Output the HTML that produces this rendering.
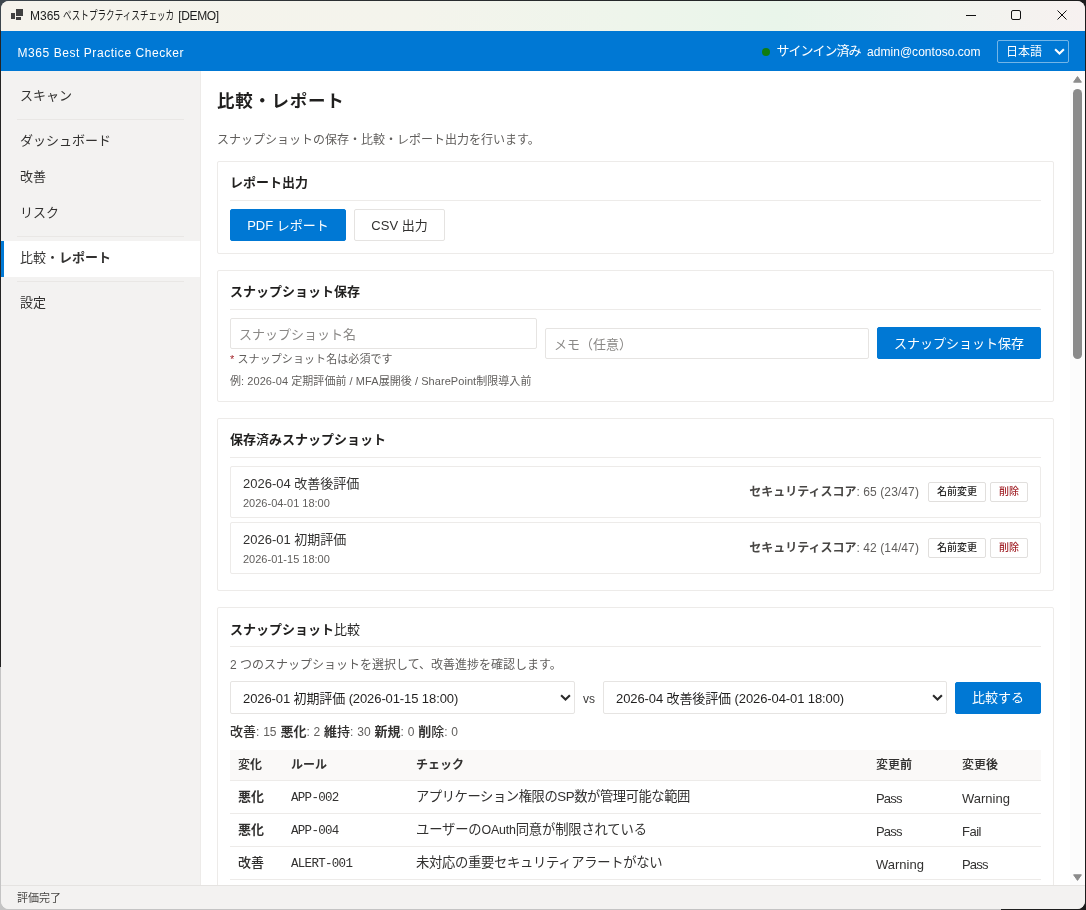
<!DOCTYPE html>
<html lang="ja">
<head>
<meta charset="utf-8">
<title>M365 ベストプラクティスチェッカ [DEMO]</title>
<style>
*{box-sizing:border-box;margin:0;padding:0}
html,body{width:1086px;height:910px;overflow:hidden;background:#1f1f1f}
html{background:linear-gradient(90deg,#3d464d 0%,#2c3033 30%,#1c1c1c 100%)}
body{background:transparent}
body{font-family:"Liberation Sans","Noto Sans CJK JP",sans-serif;font-size:13px;color:#323130;position:relative}
#deskL{position:absolute;left:0;top:0;width:12px;height:910px;background:linear-gradient(180deg,#3d464d 0,#3d464d 30px,#232323 31px,#232323 667px,#c4c4c4 667px,#c4c4c4 100%)}
#deskB{position:absolute;left:0;top:900px;width:1001px;height:10px;background:#c4c4c4}
#win{position:absolute;left:1px;top:1px;width:1084px;height:908px;border-radius:8px;overflow:hidden;background:#f3f2f1;will-change:transform}
#titlebar{position:absolute;left:0;top:0;width:1084px;height:30px;background:linear-gradient(90deg,#f5f3ec 0%,#f4f4ec 38%,#eef5eb 58%,#e9f5ea 72%,#f0f4ee 86%,#f7f1f0 100%)}
#titlebar .ttl{position:absolute;left:29px;top:0;line-height:30px;font-size:12px;color:#1b1b1b;white-space:nowrap}
#titlebar .kn{display:inline-block;transform:scaleX(.715);transform-origin:0 50%;width:115px}
#titlebar .dm{display:inline-block;letter-spacing:-.4px}
#appicon{position:absolute;left:10px;top:8px}
.wc{position:absolute;top:0;height:30px;width:46px}
#hdr{position:absolute;left:0;top:30px;width:1084px;height:40px;background:#0078d4;color:#fff}
#hdr .app{position:absolute;left:16.5px;top:1px;line-height:42px;font-size:12px;letter-spacing:.56px;white-space:nowrap}
#side{position:absolute;left:0;top:70px;width:199px;height:814px;background:#f3f2f1;padding-top:8px}
#side .it{height:36px;line-height:34px;padding-left:16px;border-left:3px solid transparent;font-size:13px;color:#323130;white-space:nowrap}
#side .it.act{background:#fff;border-left-color:#0078d4;font-weight:bold}
#side .sep{height:1px;background:#e9e7e5;margin:4px 16px 4px 16px}
s{text-decoration:none;font-weight:500}
s.r{font-weight:400}
#main{position:absolute;left:199px;top:70px;width:870px;height:814px;background:#fff;border-left:1px solid #edebe9;overflow:hidden}
#sb{position:absolute;left:1069px;top:70px;width:15px;height:814px;background:#fcfcfc}
#status{position:absolute;left:0;top:884px;width:1084px;height:24px;background:#f3f2f1;border-top:1px solid #e5e3e1;font-size:11px;color:#484644;line-height:24px;padding-left:16px}
h1{position:absolute;left:16px;top:16px;font-size:17.5px;letter-spacing:.7px;line-height:28px;font-weight:bold;color:#201f1e;white-space:nowrap}
.desc{position:absolute;left:16px;top:59px;font-size:12px;line-height:20px;color:#605e5c;white-space:nowrap}
.card{position:absolute;left:16px;width:837px;border:1px solid #edebe9;background:#fff;border-radius:2px}
.card h2{position:absolute;left:12px;top:11px;font-size:13px;line-height:20px;font-weight:bold;color:#201f1e;white-space:nowrap}
.card .hr{position:absolute;left:12px;right:12px;top:38px;height:1px;background:#edebe9}
.btn{position:absolute;height:32px;line-height:32px;text-align:center;font-size:13px;border:1px solid #e5e3e1;background:#fff;color:#323130;border-radius:2px;white-space:nowrap}
.btn.pri{background:#0078d4;border-color:#0078d4;color:#fff}

.inp{position:absolute;height:31px;border:1px solid #e6e4e2;border-radius:2px;background:#fff;font-size:13px;line-height:31px;color:#8a8886;padding-left:8px;white-space:nowrap}
.req{position:absolute;left:12px;top:79px;font-size:11px;letter-spacing:.08px;line-height:18px;color:#605e5c;white-space:nowrap}
.req i{font-style:normal;color:#a4262c}
.eg{position:absolute;left:12px;top:101px;font-size:11px;letter-spacing:.06px;line-height:18px;color:#605e5c;white-space:nowrap}
.snap{position:absolute;left:12px;width:811px;height:52px;border:1px solid #edebe9;border-radius:2px;background:#fff}
.snap .nm{position:absolute;left:12px;top:7px;font-size:13px;line-height:20px;color:#323130;white-space:nowrap}
.snap .dt{position:absolute;left:12px;top:27px;font-size:11px;line-height:18px;color:#605e5c;white-space:nowrap}
.snap .sc{position:absolute;right:121px;top:15px;font-size:12px;line-height:20px;color:#605e5c;white-space:nowrap;letter-spacing:.1px}
.snap .sc b{color:#484644;letter-spacing:0}
.sm{position:absolute;top:15px;height:20px;line-height:18px;font-size:10px;font-weight:500;text-align:center;border:1px solid #e1dfdd;border-radius:2px;background:#fff;color:#201f1e;white-space:nowrap}
.sm.del{color:#a4262c}
.cdesc{position:absolute;left:12px;top:47px;font-size:12px;line-height:20px;color:#605e5c;white-space:nowrap}
.sel{position:absolute;height:33px;border:1px solid #e6e4e2;border-radius:2px;background:#fff;font-size:13px;line-height:33px;color:#201f1e;padding-left:12px;white-space:nowrap;letter-spacing:-.1px}
.sel .chev{position:absolute;right:3px;top:12px}
.vs{position:absolute;left:365px;top:81px;font-size:12px;line-height:20px;color:#3b3a39}
.sum{position:absolute;left:12px;top:114px;font-size:12px;line-height:20px;color:#605e5c;white-space:nowrap;word-spacing:.5px}
.sum b{color:#323130;font-size:13px}
.tbl{position:absolute;left:12px;top:142px;width:811px}
.th{position:relative;height:31px;background:#faf9f8;border-bottom:1px solid #edebe9;font-size:12px;font-weight:bold;color:#323130}
.tr{position:relative;height:33px;border-bottom:1px solid #edebe9;font-size:13px;color:#323130}
.th span,.tr span{position:absolute;top:0;line-height:30px;white-space:nowrap}
.tr span{line-height:32px}
.c1{left:8px}.c2{left:61px}.c3{left:186px}.c4{left:646px}.c5{left:732px}
.tr .c1{font-weight:bold}
.tr .c3 em{font-style:normal;font-size:12.4px;position:static}
.tr .c4,.tr .c5{line-height:36px}
.tr .c2{font-family:"Liberation Mono","DejaVu Sans Mono",monospace;font-size:12.5px;letter-spacing:-.7px;line-height:35px}
.tr .c3{font-size:13.33px;line-height:32px}

#hdr .dot{position:absolute;left:761px;top:16.5px;width:8px;height:8px;border-radius:50%;background:#107c10}
#hdr .signed{position:absolute;left:775.5px;top:0;line-height:40px;font-size:13px;letter-spacing:-1px;white-space:nowrap}
#hdr .mail{position:absolute;left:866px;top:0;line-height:42px;font-size:12px;white-space:nowrap;letter-spacing:.04px}
#hdr .lang{position:absolute;left:996px;top:9px;width:72px;height:23px;border:1px solid rgba(255,255,255,.45);border-radius:2px;font-size:12px;line-height:23px;padding-left:8px;white-space:nowrap}
#hdr .lang svg{position:absolute;right:3.5px;top:6.5px}
</style>
</head>
<body>
<div id="deskL"></div><div id="deskB"></div>
<div id="win">
  <div id="titlebar">
    <svg id="appicon" width="14" height="12" viewBox="0 0 14 12"><rect x="0" y="4" width="4" height="6" fill="#404040"/><rect x="5" y="0" width="7" height="7" fill="#404040"/><rect x="5" y="8" width="5" height="3" fill="#404040"/></svg>

    <svg class="wc" style="left:947px" width="46" height="30" viewBox="0 0 46 30"><path d="M18 14.5 H28" stroke="#111" stroke-width="1" fill="none"/></svg>
    <svg class="wc" style="left:992px" width="46" height="30" viewBox="0 0 46 30"><rect x="18.5" y="9.5" width="9" height="9" rx="1.5" ry="1.5" stroke="#111" stroke-width="1" fill="none"/></svg>
    <svg class="wc" style="left:1038px" width="46" height="30" viewBox="0 0 46 30"><path d="M18.5 9.5 L27.5 18.5 M27.5 9.5 L18.5 18.5" stroke="#111" stroke-width="1" fill="none"/></svg>
    <div class="ttl">M365 <span class="kn">ベストプラクティスチェッカ</span><span class="dm">[DEMO]</span></div>
  </div>
  <div id="hdr">
    <div class="app">M365 Best Practice Checker</div>
    <div class="dot"></div>
    <div class="signed">サインイン済み</div>
    <div class="mail">admin@contoso.com</div>
    <div class="lang"><span>日本語</span><svg width="11" height="8" viewBox="0 0 11 8"><path d="M1.1 1.3 L5.5 5.5 L9.9 1.3" fill="none" stroke="#fff" stroke-width="2.1"/></svg></div>

  </div>
  <div id="side">
    <div class="it">スキャン</div>
    <div class="sep"></div>
    <div class="it">ダッシュボード</div>
    <div class="it">改善</div>
    <div class="it">リスク</div>
    <div class="sep"></div>
    <div class="it act"><s class="r">比較・</s>レポート</div>
    <div class="sep"></div>
    <div class="it">設定</div>
  </div>
  <div id="main">
    <h1>比較・レポート</h1>
    <div class="desc">スナップショットの保存・比較・レポート出力を行います。</div>

    <div class="card" style="top:90px;height:93px">
      <h2>レポート出力</h2><div class="hr"></div>
      <div class="btn pri" style="left:12px;top:47px;width:116px"><span>PDF レポート</span></div>
      <div class="btn" style="left:136px;top:47px;width:91px"><span>CSV 出力</span></div>
    </div>
    <div class="card" style="top:199px;height:132px">
      <h2>スナップショット保存</h2><div class="hr"></div>
      <div class="inp" style="left:12px;top:47px;width:307px"><span>スナップショット名</span></div>
      <div class="inp" style="left:327px;top:57px;width:324px"><span>メモ（任意）</span></div>
      <div class="btn pri" style="left:659px;top:56px;width:164px"><span>スナップショット保存</span></div>
      <div class="req"><i>*</i> スナップショット名は必須です</div>
      <div class="eg">例: 2026-04 定期評価前 / MFA展開後 / SharePoint制限導入前</div>
    </div>
    <div class="card" style="top:347px;height:173px">
      <h2>保存<s>済</s>みスナップショット</h2><div class="hr"></div>
      <div class="snap" style="top:47px">
        <div class="nm">2026-04 改善後評価</div><div class="dt">2026-04-01 18:00</div>
        <div class="sc"><b>セキュリティスコア</b>: 65 (23/47)</div>
        <div class="sm" style="left:697px;width:58px">名前変更</div><div class="sm del" style="left:759px;width:38px">削除</div>
      </div>
      <div class="snap" style="top:103px">
        <div class="nm">2026-01 初期評価</div><div class="dt">2026-01-15 18:00</div>
        <div class="sc"><b>セキュリティスコア</b>: 42 (14/47)</div>
        <div class="sm" style="left:697px;width:58px">名前変更</div><div class="sm del" style="left:759px;width:38px">削除</div>
      </div>
    </div>
    <div class="card" style="top:536px;height:320px">
      <h2 style="top:12px">スナップショット<s class="r">比較</s></h2><div class="hr"></div>
      <div class="cdesc">2 つのスナップショットを選択して、改善進捗を確認します。</div>
      <div class="sel" style="left:12px;top:73px;width:345px"><span>2026-01 初期評価 (2026-01-15 18:00)</span><svg class="chev" width="11" height="8" viewBox="0 0 11 8"><path d="M1.1 1.3 L5.5 5.5 L9.9 1.3" fill="none" stroke="#2b2b2b" stroke-width="2.1"/></svg></div>
      <div class="vs">vs</div>
      <div class="sel" style="left:385px;top:73px;width:344px"><span>2026-04 改善後評価 (2026-04-01 18:00)</span><svg class="chev" width="11" height="8" viewBox="0 0 11 8"><path d="M1.1 1.3 L5.5 5.5 L9.9 1.3" fill="none" stroke="#2b2b2b" stroke-width="2.1"/></svg></div>
      <div class="btn pri" style="left:737px;top:74px;width:86px;line-height:30px"><span>比較する</span></div>
      <div class="sum"><b><s>改善</s></b>: 15 <b>悪化</b>: 2 <b>維<s>持</s></b>: 30 <b>新規</b>: 0 <b>削<s>除</s></b>: 0</div>
      <div class="tbl">
        <div class="th"><span class="c1"><s>変</s>化</span><span class="c2">ルール</span><span class="c3">チェック</span><span class="c4"><s>変更</s>前</span><span class="c5"><s>変更</s>後</span></div>
        <div class="tr"><span class="c1">悪化</span><span class="c2">APP-002</span><span class="c3" style="letter-spacing:-.46px">アプリケーション権限のSP数が管理可能な範囲</span><span class="c4" style="letter-spacing:-.8px">Pass</span><span class="c5">Warning</span></div>
        <div class="tr"><span class="c1">悪化</span><span class="c2">APP-004</span><span class="c3" style="letter-spacing:-.18px">ユーザーの<em>OAuth</em>同意が制限されている</span><span class="c4" style="letter-spacing:-.8px">Pass</span><span class="c5" style="letter-spacing:-.5px">Fail</span></div>
        <div class="tr"><span class="c1"><s>改善</s></span><span class="c2">ALERT-001</span><span class="c3" style="letter-spacing:-.32px">未対応の重要セキュリティアラートがない</span><span class="c4">Warning</span><span class="c5" style="letter-spacing:-.8px">Pass</span></div>
      </div>
    </div>

  </div>
  <div id="sb"><svg width="15" height="814" viewBox="0 0 15 814"><path d="M3.6 11.2 L7.5 5.6 L11.4 11.2 Z" fill="#8b8b8b" stroke="#8b8b8b" stroke-width="1" stroke-linejoin="round"/><rect x="3" y="18" width="9" height="270" rx="4.5" ry="4.5" fill="#8b8b8b"/><path d="M3.6 803.8 L7.5 809.4 L11.4 803.8 Z" fill="#8b8b8b" stroke="#8b8b8b" stroke-width="1" stroke-linejoin="round"/></svg></div>
  <div id="status">評価完了</div>
</div>
</body>
</html>
